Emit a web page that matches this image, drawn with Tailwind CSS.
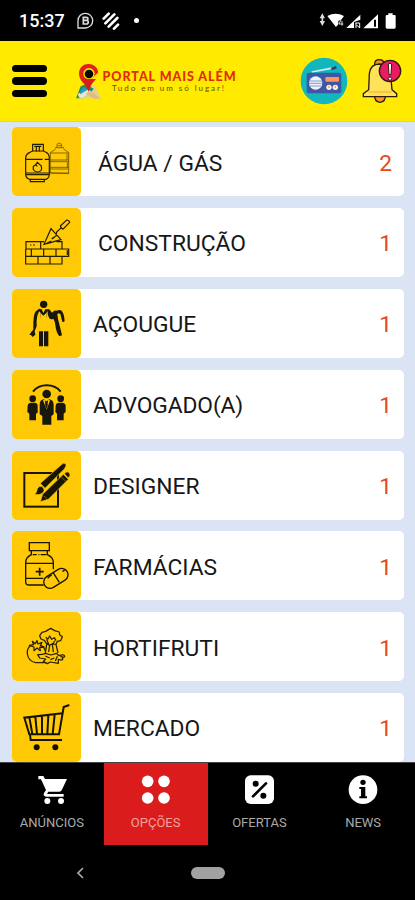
<!DOCTYPE html>
<html lang="pt-BR">
<head>
<meta charset="utf-8">
<title>Portal Mais Além</title>
<script src="https://cdn.jsdelivr.net/npm/@tailwindcss/browser@4"></script>
</head>
<body class="w-[415px] h-[900px] overflow-hidden bg-black font-['Roboto',sans-serif] flex flex-col">
<!-- Status bar -->
<div class="h-[41px] shrink-0 flex items-center text-white pl-[19px] pr-[18px]">
  <span class="text-[18px] font-medium leading-none w-[58px] whitespace-nowrap pt-[1px]">15:37</span>
  <svg class="w-[17px] h-[17px]" viewBox="230 36 51 51" fill="none" stroke="#ddd" stroke-width="4"><path d="M233 84V62A22 22 0 1 1 256 84Z"/><path d="M249 52V72H258Q264 72 264 66Q264 62 259 61Q263 60 263 56Q263 52 258 52ZM250 61H259" stroke-width="5"/></svg>
  <svg class="w-[18px] h-[18px] ml-[8px]" viewBox="305 35 54 54" stroke="#fff" stroke-width="8" stroke-linecap="round"><path d="M310 55L325 40M315 69L342 42M325 79L351 53M341 85L353 73"/></svg>
  <span class="size-[5px] rounded-full bg-white ml-[14px]"></span>
  <svg class="w-[78px] h-[18px] ml-auto" viewBox="338 35 234 54" fill="#fff"><path d="M348 39L356 54H340ZM348 77L340 62H356Z" fill="#ddd"/><path d="M348 50V68" stroke="#ddd" stroke-width="5"/><path d="M363 47Q388 33 413 47L406 57L396 62V72L389 80Z"/><path d="M404 58L398 71H411M407 62V76" stroke="#ddd" stroke-width="3" fill="none"/><path d="M462 43V58L443 65V83H420Z"/><path d="M447 68H460M449 68V83M460 68V83L451 74" stroke="#fff" stroke-width="3" fill="none"/><path d="M515 42V84H471ZM503 58V79H509V58Z" fill-rule="evenodd"/><path d="M546 39H559V44H565Q568 44 568 48V81Q568 85 564 85H542Q538 85 538 81V48Q538 44 542 44H546Z"/></svg>
</div>
<!-- Header -->
<header class="h-[81px] shrink-0 bg-[#ffea00] border-b border-[#f6d50c] flex items-center pl-3 pr-[13px]">
  <div class="w-[35px] flex flex-col gap-[5px]">
    <span class="h-[7.4px] rounded-full bg-black"></span><span class="h-[7.4px] rounded-full bg-black"></span><span class="h-[7.4px] rounded-full bg-black"></span>
  </div>
  <div class="flex items-center ml-[28.5px]">
    <svg class="w-[27px] h-[36px]" viewBox="225 190 81 108"><path d="M240 260L226 295L300 297L281 256Z" fill="#e7d28c"/><path d="M239 260L232 278L264 286L278 267L254 254Z" fill="#15916b"/><path d="M232 278L225 296H247L265 278Z" fill="#2d9754"/><path d="M230 283L262 269L270 276L246 296H236Z" fill="#e5e8d8"/><path d="M236 277L249 262L258 271L238 284Z" fill="#3394ca"/><path d="M270 273L300 297H278L253 282Z" fill="#e1bd82"/><path d="M263 276C260 256 234 246 234 222C234 182 292 184 292 222C292 235 282 240 275 250C268 258 267 267 263 276Z" fill="#df2118"/><path d="M293 217L292 238H272Z" fill="#ffea00"/><circle cx="264" cy="222" r="17" fill="#ffea00"/><circle cx="264" cy="223" r="13" fill="#080a02"/><path d="M249 237L274 238L262 276Z" fill="#d51f19"/></svg>
    <div class="w-[136px] whitespace-nowrap">
      <div class="font-['Lato',sans-serif] font-black text-[12.5px] leading-[13px] tracking-[0.96px] text-[#e22a0c]">PORTAL MAIS ALÉM</div>
      <div class="font-['Lato',sans-serif] text-[8px] leading-[10px] tracking-[1.95px] pl-[9.5px] text-[#5c5300]">Tudo em um só lugar!</div>
    </div>
  </div>
  <svg class="w-[48px] h-[48px] ml-auto" viewBox="280 171 144 144"><circle cx="352" cy="243" r="70" fill="#11b7bd"/><path d="M315 216L384 203" stroke="#d6edf0" stroke-width="5"/><path d="M374 207L389 202" stroke="#303e78" stroke-width="8"/><rect x="300" y="218" width="104" height="62" rx="8" fill="#3e57a5"/><circle cx="327" cy="249" r="20" fill="#edf2fb"/><path d="M307 243H347M307 250H347M310 258H344" stroke="#889ace" stroke-width="3"/><rect x="356" y="231" width="41" height="14" rx="3" fill="#ff9461"/><circle cx="367" cy="262" r="8" fill="#fff1dc"/><circle cx="386" cy="262" r="8" fill="#fff1dc"/><path d="M367 257V264M386 257V264" stroke="#f49a76" stroke-width="4"/></svg>
  <svg class="w-[40px] h-[46px] ml-[14px]" viewBox="464 174 120 138" stroke="#2b1b10" stroke-width="4"><path d="M502 286Q501 306 518 307Q535 306 534 286Z" fill="#ff9a27"/><path d="M502 192Q502 179 516 179Q530 179 530 193V205H502Z" fill="#ed9320"/><path d="M484 269L486 221Q489 192 517 192Q548 194 550 226L554 269L568 281V290H468V281Z" fill="#ffe15a"/><path d="M483 276H553" stroke="#f9b92b"/><circle cx="548" cy="213" r="32" fill="#eb1b61"/><path d="M543 192Q548 188 553 192L551 224H545Z" fill="#fff" stroke-width="3"/><circle cx="548" cy="236" r="5" fill="#fff" stroke-width="3"/></svg>
</header>
<!-- Category list -->
<main class="h-[640px] shrink-0 overflow-hidden bg-[#dae4f5] pt-[5.4px] pl-3 pr-[11px] flex flex-col gap-[11.8px] text-[22.8px] leading-none text-[#171717]">
  <div class="h-[69px] shrink-0 bg-white rounded-[5px] flex items-center pr-[12px]">
    <svg class="w-[69px] h-[69px] rounded-[5px] bg-[#ffc905]" viewBox="36 22 207 207" fill="none" stroke="#251d00" stroke-width="3.6"><path d="M98 94V74H130V94M103 80H124M109 80V96M118 80V96M90 98L98 94H130L138 98Q148 103 148 116V164Q148 176 138 179H89Q77 176 77 164V116Q77 103 90 98ZM78 119H128M134 119H147M78 160H147M78 165H147M91 180V186H133V180"/><path d="M112 128L124 139Q128 157 112 157Q97 155 100 140L106 136ZM107 135L112 140"/><g stroke="#6c5600" stroke-width="2.5"><path d="M171 83V74Q178 66 185 74V83M165 84H192M167 88L151 99V160L206 162V99L190 87M151 100H206M151 121H206M151 126H206M151 143H206M151 148H206M151 160H206M174 78H183M201 103V121M202 128V144"/></g></svg>
    <span class="ml-[17px] pt-[5px]">ÁGUA / GÁS</span><span class="ml-auto pt-[5px] text-[#e8481c]">2</span>
  </div>
  <div class="h-[69px] shrink-0 bg-white rounded-[5px] flex items-center pr-[12px]">
    <svg class="w-[69px] h-[69px] rounded-[5px] bg-[#ffc905]" viewBox="36 265 207 207" fill="none" stroke="#251d00" stroke-width="3.6"><path d="M132 366H78V388H186V366H169M122 366V388M90 376H94M99 376H105M77 388V410H206V388H186M94 388V410M131 388V410M168 388V410M202 392V406M77 410V433H186V410M114 410V433M150 410V433M77 433H186M132 374L183 360L153 327ZM155 357L168 349L170 337L184 324M164 352L156 358"/><path d="M181 319L200 301Q207 301 209 308L190 328Q184 328 181 319Z"/><path d="M141 370L152 365V371"/></svg>
    <span class="ml-[17px] pt-[4px]">CONSTRUÇÃO</span><span class="ml-auto pt-[4px] text-[#e8481c]">1</span>
  </div>
  <div class="h-[69px] shrink-0 bg-white rounded-[5px] flex items-center pr-[12px]">
    <svg class="w-[69px] h-[69px] rounded-[5px] bg-[#ffc905]" viewBox="36 27 207 207" fill="#171608"><circle cx="131" cy="73" r="11"/><path d="M117 86L125 88L130 99L136 88L148 88L156 98Q163 90 171 92Q176 88 183 91Q193 99 194 124L188 127Q184 116 182 104Q176 96 172 103L174 117Q180 140 186 166L178 169Q169 159 166 136Q165 123 160 116Q148 124 143 101L143 93L139 99V113H122V99L118 94Q108 108 110 139L104 154L106 164L98 171L93 165L88 165Q95 153 100 149Q99 106 106 95Z"/><path d="M122 99V113Q116 125 119 148H146Q148 124 139 113V99L130 107Z" fill="#ffc905"/><path d="M117 154H129V199H117ZM132 154H145V199H132Z"/></svg>
    <span class="ml-[12px] pt-[4px]">AÇOUGUE</span><span class="ml-auto pt-[4px] text-[#e8481c]">1</span>
  </div>
  <div class="h-[69px] shrink-0 bg-white rounded-[5px] flex items-center pr-[12px]">
    <svg class="w-[69px] h-[69px] rounded-[5px] bg-[#ffc905]" viewBox="36 269 207 207" fill="#171710"><path d="M99 334Q114 315 140 315Q167 315 182 334" fill="none" stroke="#171710" stroke-width="6"/><circle cx="98" cy="355" r="10"/><circle cx="182" cy="355" r="10"/><circle cx="140" cy="341" r="13"/><path d="M83 376Q84 367 94 367H104Q113 368 113 376V397L108 400V420H88V400L82 395ZM167 376Q168 367 177 367H187Q196 368 197 376V395L191 400V420H171V400L166 395Z"/><path d="M119 373Q119 358 132 357L139 364L147 357Q160 358 161 373V402L154 407V433H127V407L119 402Z"/><path d="M134 358L139 377L145 358L150 360L140 388L129 360Z" fill="#ffc905"/><path d="M137 363H142L143 375L140 385L136 375ZM95 368L98 378L101 368M179 368L182 378L185 368" fill="#171710" stroke="#171710"/></svg>
    <span class="ml-[12px] pt-[4px] tracking-[-0.1px]">ADVOGADO(A)</span><span class="ml-auto pt-[4px] text-[#e8481c]">1</span>
  </div>
  <div class="h-[69px] shrink-0 bg-white rounded-[5px] flex items-center pr-[12px]">
    <svg class="w-[69px] h-[69px] rounded-[5px] bg-[#ffc905]" viewBox="36 17 207 207"><rect x="73" y="83" width="101" height="101" fill="none" stroke="#181500" stroke-width="6"/><g stroke="#ffc905" stroke-width="2" fill="#181500"><path d="M121 114L184 58Q191 51 198 56Q200 62 193 71L135 129Z"/><path d="M102 147Q110 145 112 130Q117 120 127 124Q137 134 128 143Q119 151 102 147Z"/><path d="M121 169L128 147L190 87L205 102L145 162Z"/><path d="M193 85Q202 75 208 83Q214 88 205 98Z"/></g><path d="M132 152L140 160M183 94L197 108" stroke="#a98700" stroke-width="2"/></svg>
    <span class="ml-[12px] pt-[4px]">DESIGNER</span><span class="ml-auto pt-[4px] text-[#e8481c]">1</span>
  </div>
  <div class="h-[69px] shrink-0 bg-white rounded-[5px] flex items-center pr-[12px]">
    <svg class="w-[69px] h-[69px] rounded-[5px] bg-[#ffc905]" viewBox="36 259 207 207" fill="none" stroke="#181500" stroke-width="4"><path d="M88 294H148V318H88ZM94 319V330Q77 338 77 354V411Q77 421 87 421H131M142 319V330Q160 338 160 354V374M77 356H160M77 401H130M98 330H110M115 330H118M122 330H139"/><path d="M119 369V393M107 381H131" stroke-width="5"/><rect x="128" y="382" width="79" height="38" rx="19" transform="rotate(-32 168 401)"/><path d="M159 383L178 413M143 401Q149 393 155 391M187 380L194 377"/></svg>
    <span class="ml-[12px] pt-[5px]">FARMÁCIAS</span><span class="ml-auto pt-[5px] text-[#e8481c]">1</span>
  </div>
  <div class="h-[69px] shrink-0 bg-white rounded-[5px] flex items-center pr-[12px]">
    <svg class="w-[69px] h-[69px] rounded-[5px] bg-[#ffc905]" viewBox="36 22 207 207" fill="none" stroke="#292100" stroke-width="3.8" stroke-linejoin="round"><path d="M133 107L123 103L119 93L126 83L137 80L152 71L164 78L178 82L179 90L187 96L182 108L172 110L168 119L157 117L149 122L139 116ZM137 98L144 103L149 94L155 104L163 99L168 108M140 104L146 119M164 108L158 120M140 119L136 145M168 119L174 145M149 122L146 142M157 119L160 142"/><path d="M94 122Q80 129 82 148Q85 170 107 174H138M120 122Q134 125 136 140M88 122L101 120L97 110L106 117L111 108L114 118L126 113L121 123L132 127L119 128L121 138L111 130L102 138L102 127Z"/><path d="M113 150Q126 151 137 146L153 151L169 146L177 153Q194 147 194 156L187 160Q192 169 175 164L175 176L151 172L142 177L130 170L137 163L119 160ZM136 154L149 160M151 165L163 160M166 169L172 155M181 156H188"/></svg>
    <span class="ml-[12px] pt-[5px]">HORTIFRUTI</span><span class="ml-auto pt-[5px] text-[#e8481c]">1</span>
  </div>
  <div class="h-[69px] shrink-0 bg-white rounded-[5px] flex items-center pr-[12px]">
    <svg class="w-[69px] h-[69px] rounded-[5px] bg-[#ffc905]" viewBox="36 264 207 207" fill="none" stroke="#151200" stroke-width="6"><path d="M208 300L191 306L177 388H88L73 338L187 325M90 388L92 405H186M88 337L97 387M106 335L111 387M126 333V387M145 331L142 387M164 329L158 387" /><circle cx="110" cy="427" r="9" fill="#151200" stroke="none"/><circle cx="166" cy="427" r="9" fill="#151200" stroke="none"/></svg>
    <span class="ml-[12px] pt-[4px]">MERCADO</span><span class="ml-auto pt-[4px] text-[#e8481c]">1</span>
  </div>
</main>
<!-- Tab bar -->
<nav class="h-[83px] shrink-0 grid grid-cols-4 border-t border-[#444] text-[13px] leading-[14px] text-[#aaa]">
  <div class="flex flex-col items-center pt-[12px] gap-[11px]"><svg class="w-[30px] h-[30px]" viewBox="111 60 90 90" fill="#fff"><path d="M115 63H130L135 72H201L185 106Q183 110 178 110H145L141 117H191V125H139Q128 124 132 114L138 105L123 73H115Z"/><circle cx="142" cy="138" r="9"/><circle cx="183" cy="138" r="9"/></svg><span>ANÚNCIOS</span></div>
  <div class="flex flex-col items-center pt-[12px] gap-[11px] bg-[#da1c1c] text-[#f2a19b]"><svg class="w-[30px] h-[30px]" viewBox="424 60 90 90" fill="#fff"><circle cx="444" cy="79" r="17.5"/><circle cx="493" cy="79" r="17.5"/><circle cx="444" cy="129" r="17.5"/><circle cx="493" cy="129" r="17.5"/></svg><span>OPÇÕES</span></div>
  <div class="flex flex-col items-center pt-[12px] gap-[11px]"><svg class="w-[30px] h-[30px]" viewBox="112 60 90 90"><rect x="115" y="61" width="87" height="86" rx="17" fill="#fff"/><path d="M139 124L178 85" stroke="#000" stroke-width="8" stroke-linecap="round"/><circle cx="147" cy="86" r="9"/><circle cx="170" cy="122" r="9"/></svg><span>OFERTAS</span></div>
  <div class="flex flex-col items-center pt-[12px] gap-[11px]"><svg class="w-[30px] h-[30px]" viewBox="425 60 90 90"><circle cx="470" cy="104" r="43" fill="#fff"/><circle cx="470" cy="82" r="8"/><path d="M459 96H477V124H482V130H459V124H464V102H459Z"/></svg><span>NEWS</span></div>
</nav>
<!-- System navigation -->
<div class="h-[55px] shrink-0 grid grid-cols-[1fr_34px_1fr] items-start pt-[22px]">
  <svg class="w-[8px] h-[12px] ml-[76px]" viewBox="0 0 8 12" fill="none" stroke="#aaa" stroke-width="1.7"><path d="M7 1L2 6L7 11"/></svg>
  <span class="h-[12px] w-[34px] rounded-full bg-[#a2a2a2] ml-[0.5px]"></span>
</div>
</body>
</html>
